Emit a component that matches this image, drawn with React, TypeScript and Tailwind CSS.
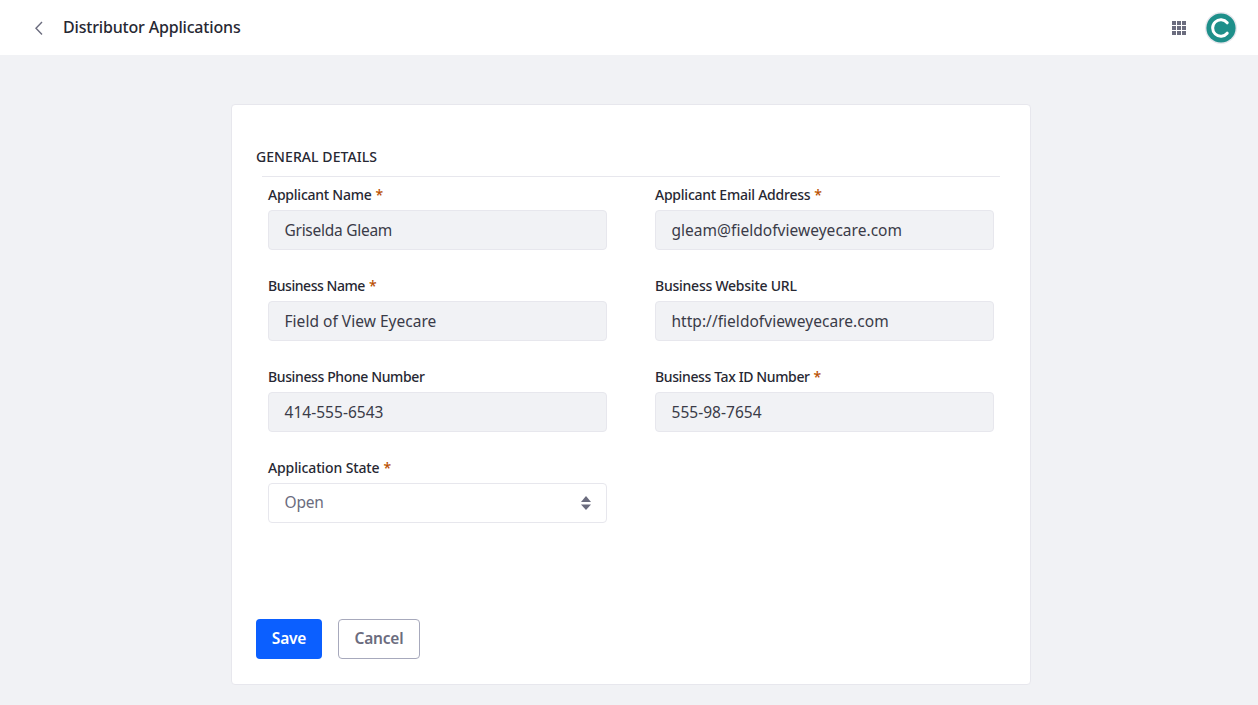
import React from "react";

const font = { fontFamily: '"Noto Sans", sans-serif' };

function Star() {
  return <span className="ml-[4px] text-[#b95000]">*</span>;
}

function Label({ text, required, className }: { text: string; required?: boolean; className: string }) {
  return (
    <div className={`h-[20px] text-[14px] leading-[20px] font-medium text-[#272833] whitespace-nowrap ${className}`}>
      {text}
      {required && <Star />}
    </div>
  );
}

function Field({
  label,
  value,
  required,
  labelClass,
  valueClass,
}: {
  label: string;
  value: string;
  required?: boolean;
  labelClass: string;
  valueClass: string;
}) {
  return (
    <div className="w-[339px]">
      <Label text={label} required={required} className={labelClass} />
      <div
        className={`mt-[5px] h-[40px] w-full rounded-[4px] border border-[#e7e7ed] bg-[#f1f2f5] pl-[15.5px] text-[15.5px] leading-[38px] text-[#3a3b48] whitespace-nowrap ${valueClass}`}
      >
        {value}
      </div>
    </div>
  );
}

export default function App() {
  return (
    <div className="min-h-[705px] bg-[#f1f2f5]" style={font}>
      <header className="flex h-[55px] items-center justify-between bg-white pl-[32px] pr-[21px]">
        <div className="flex items-center">
          <svg width="14" height="14" viewBox="0 0 14 14" fill="none" className="mr-[17px]">
            <path d="M10 1 L4 7.2 L10 13.4" stroke="#6b6c7e" strokeWidth="1.4" />
          </svg>
          <span className="-mt-[2px] text-[16px] font-medium tracking-[-0.18px] text-[#272833]">Distributor Applications</span>
        </div>
        <div className="flex items-center gap-[19px]">
          <svg width="14" height="14" viewBox="0 0 14 14" fill="#6b6c7e">
            {[0, 5, 10].flatMap((y) =>
              [0, 5, 10].map((x) => <rect key={`${x}-${y}`} x={x} y={y} width="4" height="4" />)
            )}
          </svg>
          <svg width="32" height="32" viewBox="0 0 32 32">
            <circle cx="16" cy="16" r="16" fill="#e7e7ed" />
            <circle cx="16" cy="16" r="14.6" fill="#1e8f8a" />
            <path d="M22.2 10.8 A8.2 8.2 0 1 0 22.2 21.2" fill="none" stroke="#fff" strokeWidth="3" strokeLinecap="round" />
          </svg>
        </div>
      </header>

      <main className="flex justify-center pl-[4px] pt-[49px]">
        <div className="flex h-[581px] w-[800px] flex-col rounded-[4px] border border-[#e7e7ed] bg-white pl-[24px] pr-[30px] pt-[43px]">
          <h2 className="h-[18px] text-[14px] leading-[18px] font-medium tracking-[0.07px] text-[#272833]">GENERAL DETAILS</h2>
          <div className="ml-[6px] mt-[10px] border-t border-[#e7e7ed]" />
          <div className="ml-[12px] mt-[8px] grid w-[726px] grid-cols-[339px_339px] gap-x-[48px] gap-y-[26px]">
            <Field label="Applicant Name" value="Griselda Gleam" required labelClass="tracking-[-0.24px]" valueClass="tracking-[-0.27px]" />
            <Field label="Applicant Email Address" value="gleam@fieldofvieweyecare.com" required labelClass="tracking-[-0.24px]" valueClass="tracking-[0.03px]" />
            <Field label="Business Name" value="Field of View Eyecare" required labelClass="tracking-[-0.45px]" valueClass="tracking-[0.03px]" />
            <Field label="Business Website URL" value="http://fieldofvieweyecare.com" labelClass="tracking-[-0.24px]" valueClass="tracking-[0.03px]" />
            <Field label="Business Phone Number" value="414-555-6543" labelClass="tracking-[-0.38px]" valueClass="tracking-[0.03px]" />
            <Field label="Business Tax ID Number" value="555-98-7654" required labelClass="tracking-[-0.38px]" valueClass="tracking-[0.03px]" />
            <div className="w-[339px]">
              <Label text="Application State" required className="tracking-[-0.12px]" />
              <div className="mt-[5px] flex h-[40px] items-center justify-between rounded-[4px] border border-[#e7e7ed] bg-white pl-[15.5px] pr-[14px] text-[15.5px] tracking-[-0.2px] text-[#6b6c7e]">
                <span>Open</span>
                <svg width="12" height="16" viewBox="0 0 12 16" fill="#6b6c7e">
                  <path d="M6 1 L11 7 H1 Z" />
                  <path d="M6 15 L11 9.5 H1 Z" />
                </svg>
              </div>
            </div>
          </div>
          <div className="mt-auto mb-[25px] flex gap-[16px]">
            <button className="h-[40px] w-[66px] rounded-[4px] bg-[#0b5fff] text-[15.5px] font-semibold tracking-[-0.2px] text-white">Save</button>
            <button className="h-[40px] w-[82px] rounded-[4px] border border-[#a7a9bc] bg-white text-[15.5px] font-semibold tracking-[-0.2px] text-[#6b6c7e]">Cancel</button>
          </div>
        </div>
      </main>
    </div>
  );
}
